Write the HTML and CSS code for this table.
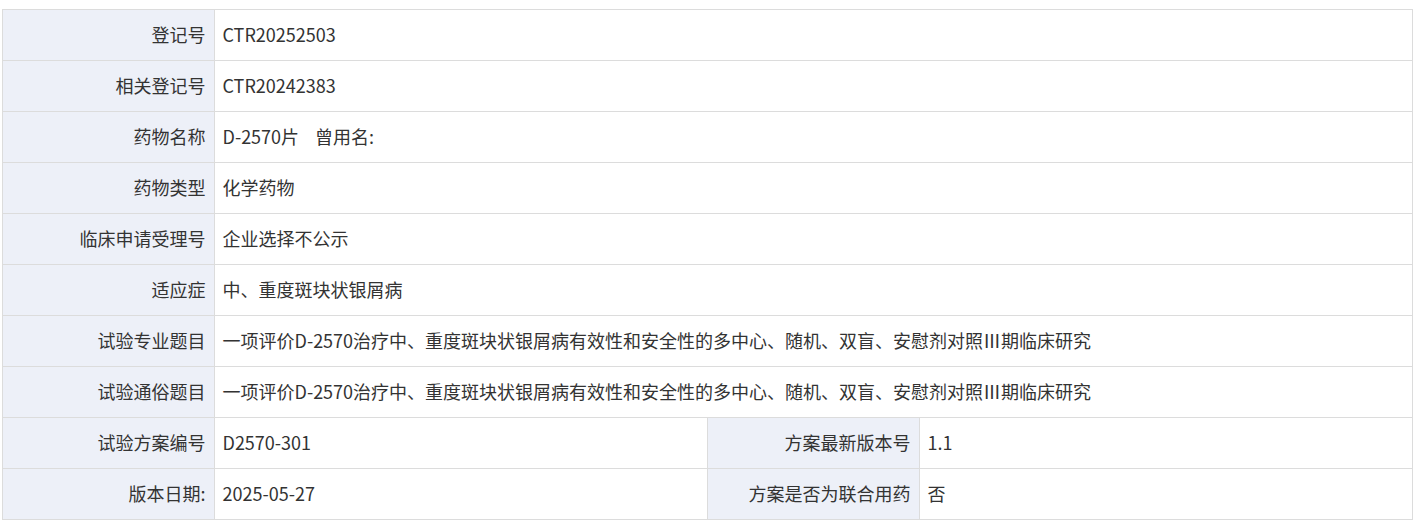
FILE: index.html
```html
<!DOCTYPE html>
<html lang="zh-CN">

<head>
    <meta charset="UTF-8">
    <meta name="viewport" content="width=device-width, initial-scale=1.0">
    <title>试验信息</title>
    <link rel="stylesheet" href="styles.css">
</head>
<body>
<section class="trial">
    <table class="info-table">
        <colgroup>
            <col class="col-label">
            <col class="col-value">
            <col class="col-label">
            <col class="col-value">
        </colgroup>
        <tr>
            <th>登记号</th>
            <td colspan="3">CTR20252503</td>
        </tr>
        <tr>
            <th>相关登记号</th>
            <td colspan="3">CTR20242383</td>
        </tr>
        <tr>
            <th>药物名称</th>
            <td colspan="3">D-2570片<span class="alias">曾用名:</span></td>
        </tr>
        <tr>
            <th>药物类型</th>
            <td colspan="3">化学药物</td>
        </tr>
        <tr>
            <th>临床申请受理号</th>
            <td colspan="3">企业选择不公示</td>
        </tr>
        <tr>
            <th>适应症</th>
            <td colspan="3">中、重度斑块状银屑病</td>
        </tr>
        <tr>
            <th>试验专业题目</th>
            <td colspan="3">一项评价D-2570治疗中、重度斑块状银屑病有效性和安全性的多中心、随机、双盲、安慰剂对照Ⅲ期临床研究</td>
        </tr>
        <tr>
            <th>试验通俗题目</th>
            <td colspan="3">一项评价D-2570治疗中、重度斑块状银屑病有效性和安全性的多中心、随机、双盲、安慰剂对照Ⅲ期临床研究</td>
        </tr>
        <tr>
            <th>试验方案编号</th>
            <td>D2570-301</td>
            <th>方案最新版本号</th>
            <td>1.1</td>
        </tr>
        <tr>
            <th>版本日期:</th>
            <td>2025-05-27</td>
            <th>方案是否为联合用药</th>
            <td>否</td>
        </tr>
    </table>
</section>
</body>
</html>
```

FILE: styles.css
```css
body {
    margin: 0;
    background: #fff;
    font-family: "Microsoft YaHei", "Noto Sans CJK SC", "Noto Sans", sans-serif;
    color: #333;
}

.trial {
    padding: 9px 11px 0 2px;
}

.info-table {
    width: 100%;
    border-collapse: collapse;
    table-layout: fixed;
    font-size: 18px;
}

.col-label {
    width: 15%;
}

.col-value {
    width: 35%;
}

.info-table th,
.info-table td {
    height: 51px;
    padding: 0 8px 3px;
    border: 1px solid #dcdcdc;
    box-sizing: border-box;
    vertical-align: middle;
    white-space: nowrap;
}

.info-table th {
    background: #edf0f8;
    font-weight: normal;
    text-align: right;
}

.info-table td {
    text-align: left;
}

.alias {
    margin-left: 16px;
}
```
